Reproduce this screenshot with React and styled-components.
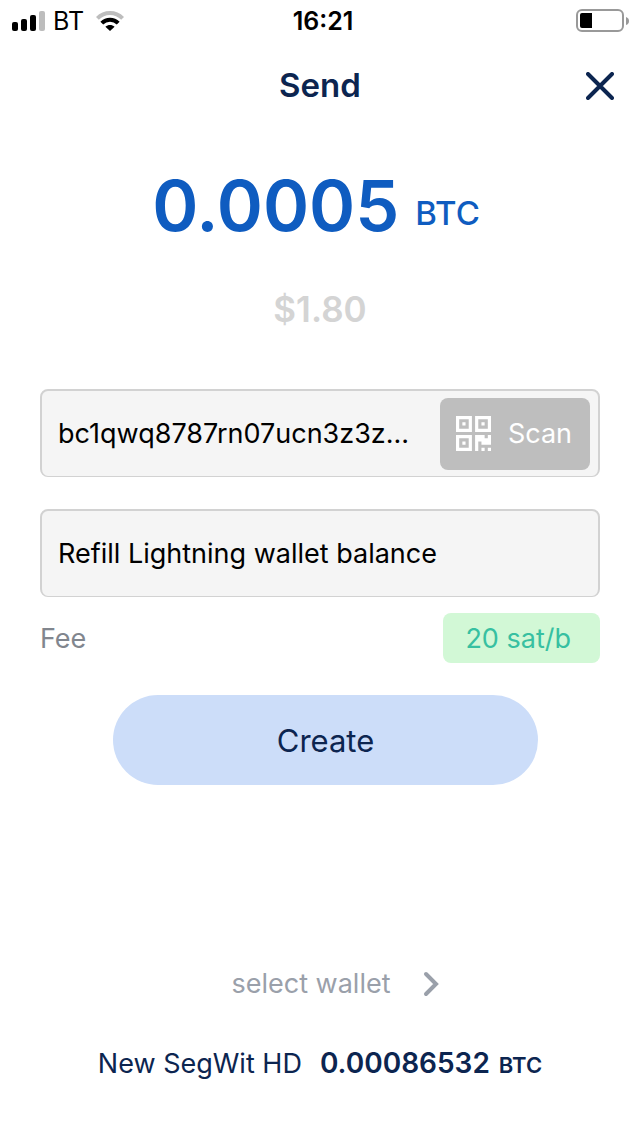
import React from 'react'
import styled, { createGlobalStyle } from 'styled-components'

const GlobalStyle = createGlobalStyle`
    * {
        box-sizing: border-box;
    }

    body {
        margin: 0;
        background-color: #FFFFFF;
        font-family: Inter, 'Liberation Sans', sans-serif;
    }

    button, input {
        font-family: inherit;
        margin: 0;
    }
`

const Screen = styled.div`
    min-height: 100vh;
    display: flex;
    flex-direction: column;
`

const StatusBar = styled.div`
    display: grid;
    grid-template-columns: 1fr auto 1fr;
    align-items: center;
    height: 41px;
    padding: 0 10px 0 12px;
    color: #000000;
`

const Signal = styled.div`
    display: flex;
    align-items: center;
    gap: 8px;
`

const Carrier = styled.span`
    font-size: 25px;
    line-height: 32px;
`

const Clock = styled.span`
    font-size: 25px;
    line-height: 32px;
    font-weight: 600;
    padding-left: 4px;
`

const WifiIcon = styled.svg`
    margin-left: 4px;
`

const BatteryIcon = styled.svg`
    justify-self: end;
`

const Header = styled.header`
    display: grid;
    grid-template-columns: 80px 1fr 80px;
    align-items: center;
    height: 88px;
`

const Title = styled.h1`
    grid-column: 2;
    margin: 0;
    text-align: center;
    font-size: 33px;
    line-height: 40px;
    font-weight: 600;
    color: #0C2550;
`

const CloseButton = styled.button`
    display: flex;
    justify-content: center;
    align-items: center;
    height: 80px;
    padding: 2px 0 0;
    border: none;
    background: none;
    cursor: pointer;
`

const Amount = styled.label`
    display: flex;
    justify-content: center;
    align-items: flex-end;
    gap: 16px;
    margin-top: 32px;
    padding-right: 8px;
    color: #0F5CC0;
`

const AmountInput = styled.input`
    field-sizing: content;
    height: 88px;
    padding: 0;
    border: none;
    outline: none;
    background: none;
    color: inherit;
    font-size: 70px;
    font-weight: 600;
`

const AmountUnit = styled.span`
    padding-bottom: 16px;
    font-size: 33px;
    line-height: 40px;
    font-weight: 500;
`

const Fiat = styled.p`
    margin: 36px 0 0;
    text-align: center;
    font-size: 35px;
    line-height: 48px;
    font-weight: 600;
    color: #D4D4D4;
`

const Form = styled.form`
    display: flex;
    flex-direction: column;
    margin-top: 56px;
    padding: 0 40px;
`

const Field = styled.div`
    display: flex;
    align-items: center;
    height: 88px;
    margin-bottom: 32px;
    padding: 0 8px 0 16px;
    border: 2px solid #D2D2D2;
    border-bottom-width: 1px;
    border-radius: 8px;
    background-color: #F5F5F5;
`

const TextInput = styled.input`
    flex: 1;
    min-width: 0;
    padding: 0;
    border: none;
    outline: none;
    background: none;
    color: #000000;
    font-size: 27px;
    line-height: 40px;
`

const ScanButton = styled.button`
    display: flex;
    justify-content: space-between;
    align-items: center;
    width: 150px;
    height: 72px;
    padding: 0 18px 0 16px;
    border: none;
    border-radius: 8px;
    background-color: #BEBEBE;
    color: #FFFFFF;
    font-size: 27px;
    cursor: pointer;
`

const FeeRow = styled.div`
    display: flex;
    justify-content: space-between;
    align-items: center;
    margin-top: -16px;
`

const FeeLabel = styled.span`
    font-size: 27px;
    color: #81868E;
`

const FeeButton = styled.button`
    height: 50px;
    padding: 0 29px 0 22px;
    border: none;
    border-radius: 8px;
    background-color: #D2F8D6;
    color: #37C0A1;
    font-size: 27px;
    cursor: pointer;
`

const CreateButton = styled.button`
    align-self: center;
    width: 76%;
    height: 90px;
    margin: 32px 0 0 11px;
    border: none;
    border-radius: 45px;
    background-color: #CCDDF9;
    color: #0C2550;
    font-size: 31px;
    cursor: pointer;
`

const Footer = styled.footer`
    display: flex;
    flex-direction: column;
    align-items: center;
    gap: 39px;
    margin-top: auto;
    padding-bottom: 51px;
`

const SelectWallet = styled.button`
    display: flex;
    align-items: center;
    gap: 32px;
    padding: 0 0 0 30px;
    border: none;
    background: none;
    color: #9AA0AA;
    font-size: 27px;
    line-height: 40px;
    cursor: pointer;
`

const Wallet = styled.button`
    display: flex;
    align-items: baseline;
    padding: 0;
    border: none;
    background: none;
    color: #0C2550;
    font-size: 27px;
    line-height: 40px;
    cursor: pointer;
`

const Balance = styled.span`
    margin: 0 9px 0 18px;
    font-size: 28px;
    font-weight: 600;
`

const BalanceUnit = styled.span`
    font-size: 22px;
    font-weight: 600;
`

const App = () => {
  return (
  <>
    <GlobalStyle />
    <Screen>
        <StatusBar>
            <Signal>
                <svg width="33" height="20" viewBox="0 0 33 20">
                    <rect x="0" y="11" width="6" height="9" rx="2" />
                    <rect x="9" y="8" width="6" height="12" rx="2" />
                    <rect x="18" y="4" width="6" height="16" rx="2" />
                    <rect x="27" y="0" width="6" height="20" rx="2" fill="#BDBDBD" />
                </svg>
                <Carrier>BT</Carrier>
                <WifiIcon width="28" height="20" viewBox="0 0 28 20" fill="none" strokeWidth="4">
                    <path d="M1.4 7.4C8.5 0.3 19.5 0.3 26.6 7.4" stroke="#BDBDBD" />
                    <path d="M5.8 12.2C10.4 7.6 17.6 7.6 22.2 12.2" stroke="#000000" />
                    <path d="M9.4 15.8C12 13.4 16 13.4 18.6 15.8L14 20Z" fill="#000000" />
                </WifiIcon>
            </Signal>
            <Clock>16:21</Clock>
            <BatteryIcon width="54" height="24" viewBox="0 0 54 24">
                <rect x="1" y="1" width="46" height="21" rx="5" fill="none" stroke="#999999" strokeWidth="2" />
                <path d="M6 4H16V19H6Q4 19 4 17V6Q4 4 6 4Z" />
                <path d="M50 8Q53 9 53 12Q53 15 50 16Z" fill="#999999" />
            </BatteryIcon>
        </StatusBar>
        <Header>
            <Title>Send</Title>
            <CloseButton aria-label="Close">
                <svg width="28" height="28" viewBox="0 0 28 28" stroke="#0C2550" strokeWidth="4" strokeLinecap="round">
                    <path d="M2 2L26 26M26 2L2 26" />
                </svg>
            </CloseButton>
        </Header>
        <Amount>
            <AmountInput defaultValue="0.0005" inputMode="decimal" />
            <AmountUnit>BTC</AmountUnit>
        </Amount>
        <Fiat>$1.80</Fiat>
        <Form onSubmit={e => e.preventDefault()}>
            <Field>
                <TextInput aria-label="Address" defaultValue="bc1qwq8787rn07ucn3z3z..." />
                <ScanButton type="button">
                    <svg width="35" height="35" viewBox="0 0 11 11" fill="#FFFFFF" fillRule="evenodd">
                        <path d="M0 0H5V5H0ZM1 1V4H4V1ZM2 2H3V3H2Z" />
                        <path d="M6 0H11V5H6ZM7 1V4H10V1ZM8 2H9V3H8Z" />
                        <path d="M0 6H5V11H0ZM1 7V10H4V7ZM2 8H3V9H2Z" />
                        <path d="M6 6H9V7H10V6H11V9H8V8H7V11H6ZM8 10H9V11H8ZM10 10H11V11H10Z" />
                    </svg>
                    Scan
                </ScanButton>
            </Field>
            <Field>
                <TextInput aria-label="Note" defaultValue="Refill Lightning wallet balance" />
            </Field>
            <FeeRow>
                <FeeLabel>Fee</FeeLabel>
                <FeeButton type="button">20 sat/b</FeeButton>
            </FeeRow>
            <CreateButton type="submit">Create</CreateButton>
        </Form>
        <Footer>
            <SelectWallet>
                select wallet
                <svg width="16" height="26" viewBox="0 0 16 26" fill="none" stroke="#9AA0AA" strokeWidth="4" strokeLinecap="round">
                    <path d="M3 3L13 13L3 23" />
                </svg>
            </SelectWallet>
            <Wallet>
                New SegWit HD
                <Balance>0.00086532</Balance>
                <BalanceUnit>BTC</BalanceUnit>
            </Wallet>
        </Footer>
    </Screen>
  </>
  )
}

export default App
